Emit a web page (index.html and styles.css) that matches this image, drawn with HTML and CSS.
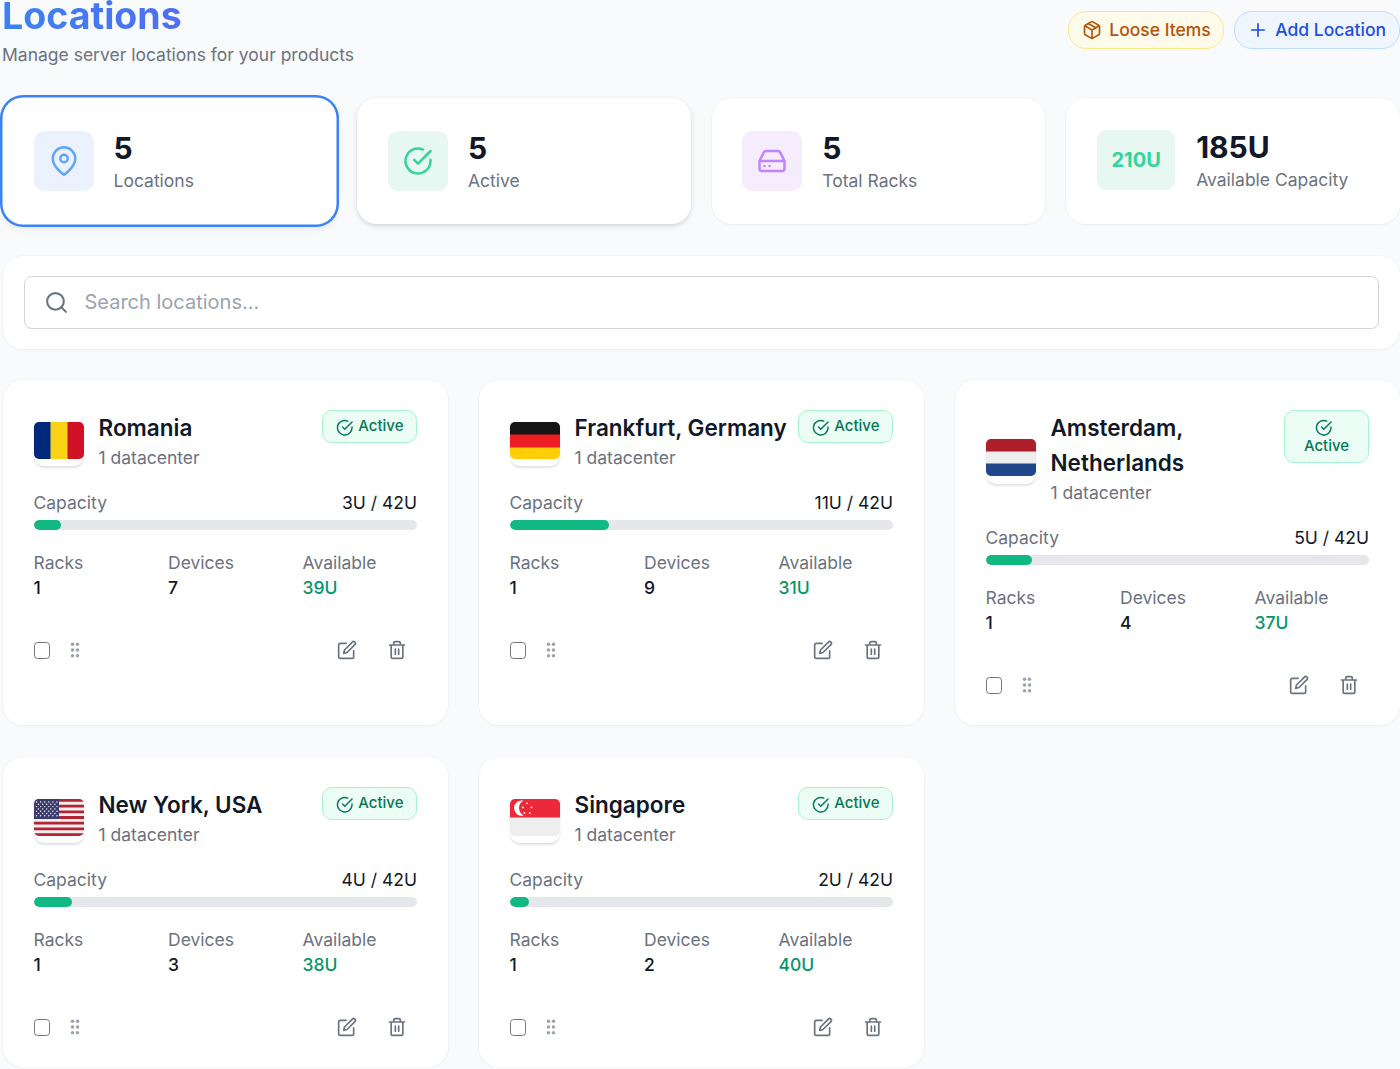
FILE: index.html
```
<!DOCTYPE html>
<html lang="en">
<head>
    <meta charset="UTF-8">
    <meta name="viewport" content="width=device-width, initial-scale=1.0">
    <title>Locations</title>
    <link rel="stylesheet" href="styles.css">
</head>
<body>
    <!-- Shared icons -->
    <svg class="sprite" aria-hidden="true">
        <symbol id="icon-check" viewBox="0 0 24 24"><path d="M22 11.08V12a10 10 0 1 1-5.93-9.14"/><path d="M22 4 12 14.01l-3-3"/></symbol>
        <symbol id="icon-edit" viewBox="0 0 24 24"><path d="M11 4H4a2 2 0 0 0-2 2v14a2 2 0 0 0 2 2h14a2 2 0 0 0 2-2v-7"/><path d="M18.5 2.5a2.121 2.121 0 0 1 3 3L12 15l-4 1 1-4 9.5-9.5z"/></symbol>
        <symbol id="icon-trash" viewBox="0 0 24 24"><path d="M3 6h18M19 6v14a2 2 0 0 1-2 2H7a2 2 0 0 1-2-2V6m3 0V4a2 2 0 0 1 2-2h4a2 2 0 0 1 2 2v2M10 11v6M14 11v6"/></symbol>
        <symbol id="icon-grip" viewBox="0 0 10 16"><circle cx="2.5" cy="2.2" r="1.75"/><circle cx="7.5" cy="2.2" r="1.75"/><circle cx="2.5" cy="8" r="1.75"/><circle cx="7.5" cy="8" r="1.75"/><circle cx="2.5" cy="13.8" r="1.75"/><circle cx="7.5" cy="13.8" r="1.75"/></symbol>
    </svg>

    <div class="page">
        <header class="page-header">
            <div>
                <h1>Locations</h1>
                <p class="subtitle">Manage server locations for your products</p>
            </div>
            <div class="header-actions">
                <button type="button" class="btn btn-amber">
                    <svg class="icon" viewBox="0 0 24 24"><path d="M16.5 9.4 7.5 4.21"/><path d="M21 16V8a2 2 0 0 0-1-1.73l-7-4a2 2 0 0 0-2 0l-7 4A2 2 0 0 0 3 8v8a2 2 0 0 0 1 1.73l7 4a2 2 0 0 0 2 0l7-4A2 2 0 0 0 21 16z"/><path d="M3.27 6.96 12 12.01l8.73-5.05M12 22.08V12"/></svg>
                    Loose Items
                </button>
                <button type="button" class="btn btn-blue">
                    <svg class="icon" viewBox="0 0 24 24"><path d="M12 4.5v15M4.5 12h15"/></svg>
                    Add Location
                </button>
            </div>
        </header>

        <section class="stats">
            <div class="stat selected">
                <div class="stat-icon blue"><svg class="icon" viewBox="0 0 24 24"><path d="M21 10c0 7-9 13-9 13s-9-6-9-13a9 9 0 0 1 18 0z"/><circle cx="12" cy="10" r="3"/></svg></div>
                <div>
                    <div class="stat-value">5</div>
                    <div class="stat-label">Locations</div>
                </div>
            </div>
            <div class="stat raised">
                <div class="stat-icon green"><svg class="icon"><use href="#icon-check"/></svg></div>
                <div>
                    <div class="stat-value">5</div>
                    <div class="stat-label">Active</div>
                </div>
            </div>
            <div class="stat">
                <div class="stat-icon purple"><svg class="icon" viewBox="0 0 24 24"><path d="M22 12H2M5.45 5.11 2 12v6a2 2 0 0 0 2 2h16a2 2 0 0 0 2-2v-6l-3.45-6.89A2 2 0 0 0 16.76 4H7.24a2 2 0 0 0-1.79 1.11zM6 16h.01M10 16h.01"/></svg></div>
                <div>
                    <div class="stat-value">5</div>
                    <div class="stat-label">Total Racks</div>
                </div>
            </div>
            <div class="stat capacity-stat">
                <div class="stat-icon green wide">210U</div>
                <div>
                    <div class="stat-value">185U</div>
                    <div class="stat-label">Available Capacity</div>
                </div>
            </div>
        </section>

        <section class="search">
            <label class="search-field">
                <svg class="icon" viewBox="0 0 24 24"><circle cx="11" cy="11" r="8"/><path d="m21 21-4.35-4.35"/></svg>
                <input type="text" placeholder="Search locations...">
            </label>
        </section>

        <section class="locations">
            <article class="card">
                <div class="card-header">
                    <div class="flag">
                        <svg viewBox="0 0 50 37"><path fill="#00297b" d="M0 0h17v37H0z"/><path fill="#fad314" d="M16.5 0H34v37H16.5z"/><path fill="#ce1124" d="M33.5 0H50v37H33.5z"/></svg>
                    </div>
                    <div class="card-title">
                        <h2>Romania</h2>
                        <p>1 datacenter</p>
                    </div>
                    <span class="badge"><svg class="icon"><use href="#icon-check"/></svg>Active</span>
                </div>
                <div class="capacity"><span>Capacity</span><span class="capacity-value">3U / 42U</span></div>
                <div class="bar"><div class="bar-fill" style="width: 7.14%"></div></div>
                <dl class="details">
                    <div><dt>Racks</dt><dd>1</dd></div>
                    <div><dt>Devices</dt><dd>7</dd></div>
                    <div><dt>Available</dt><dd class="available">39U</dd></div>
                </dl>
                <div class="card-footer">
                    <input type="checkbox" class="check">
                    <svg class="grip"><use href="#icon-grip"/></svg>
                    <button type="button" class="icon-btn first"><svg class="icon"><use href="#icon-edit"/></svg></button>
                    <button type="button" class="icon-btn"><svg class="icon"><use href="#icon-trash"/></svg></button>
                </div>
            </article>

            <article class="card">
                <div class="card-header">
                    <div class="flag">
                        <svg viewBox="0 0 50 37"><path fill="#141414" d="M0 0h50v13H0z"/><path fill="#ed1f24" d="M0 12.5h50V26H0z"/><path fill="#ffce05" d="M0 25.5h50V37H0z"/></svg>
                    </div>
                    <div class="card-title">
                        <h2>Frankfurt, Germany</h2>
                        <p>1 datacenter</p>
                    </div>
                    <span class="badge"><svg class="icon"><use href="#icon-check"/></svg>Active</span>
                </div>
                <div class="capacity"><span>Capacity</span><span class="capacity-value">11U / 42U</span></div>
                <div class="bar"><div class="bar-fill" style="width: 26%"></div></div>
                <dl class="details">
                    <div><dt>Racks</dt><dd>1</dd></div>
                    <div><dt>Devices</dt><dd>9</dd></div>
                    <div><dt>Available</dt><dd class="available">31U</dd></div>
                </dl>
                <div class="card-footer">
                    <input type="checkbox" class="check">
                    <svg class="grip"><use href="#icon-grip"/></svg>
                    <button type="button" class="icon-btn first"><svg class="icon"><use href="#icon-edit"/></svg></button>
                    <button type="button" class="icon-btn"><svg class="icon"><use href="#icon-trash"/></svg></button>
                </div>
            </article>

            <article class="card">
                <div class="card-header">
                    <div class="flag">
                        <svg viewBox="0 0 50 37"><path fill="#ae1f2a" d="M0 0h50v13H0z"/><path fill="#eee" d="M0 12.5h50V25H0z"/><path fill="#20478c" d="M0 24.5h50V37H0z"/></svg>
                    </div>
                    <div class="card-title">
                        <h2>Amsterdam, Netherlands</h2>
                        <p>1 datacenter</p>
                    </div>
                    <span class="badge stacked"><svg class="icon"><use href="#icon-check"/></svg> Active</span>
                </div>
                <div class="capacity"><span>Capacity</span><span class="capacity-value">5U / 42U</span></div>
                <div class="bar"><div class="bar-fill" style="width: 12%"></div></div>
                <dl class="details">
                    <div><dt>Racks</dt><dd>1</dd></div>
                    <div><dt>Devices</dt><dd>4</dd></div>
                    <div><dt>Available</dt><dd class="available">37U</dd></div>
                </dl>
                <div class="card-footer">
                    <input type="checkbox" class="check">
                    <svg class="grip"><use href="#icon-grip"/></svg>
                    <button type="button" class="icon-btn first"><svg class="icon"><use href="#icon-edit"/></svg></button>
                    <button type="button" class="icon-btn"><svg class="icon"><use href="#icon-trash"/></svg></button>
                </div>
            </article>

            <article class="card">
                <div class="card-header">
                    <div class="flag">
                        <svg viewBox="0 0 50 37">
                            <path fill="#eee" d="M0 0h50v37H0z"/>
                            <path stroke="#b22334" stroke-width="2.85" d="M0 1.42h50M0 7.12h50M0 12.81h50M0 18.5h50M0 24.19h50M0 29.88h50M0 35.58h50"/>
                            <path fill="#3c3b6e" d="M0 0h25v19.9H0z"/>
                            <g stroke="#fff" stroke-width="1.4" stroke-linecap="round" stroke-dasharray="0 4.1">
                                <path d="M2.5 3h21M2.5 7.6h21M2.5 12.2h21M2.5 16.8h21"/>
                                <path d="M4.5 5.3h17M4.5 9.9h17M4.5 14.5h17"/>
                            </g>
                        </svg>
                    </div>
                    <div class="card-title">
                        <h2>New York, USA</h2>
                        <p>1 datacenter</p>
                    </div>
                    <span class="badge"><svg class="icon"><use href="#icon-check"/></svg>Active</span>
                </div>
                <div class="capacity"><span>Capacity</span><span class="capacity-value">4U / 42U</span></div>
                <div class="bar"><div class="bar-fill" style="width: 10%"></div></div>
                <dl class="details">
                    <div><dt>Racks</dt><dd>1</dd></div>
                    <div><dt>Devices</dt><dd>3</dd></div>
                    <div><dt>Available</dt><dd class="available">38U</dd></div>
                </dl>
                <div class="card-footer">
                    <input type="checkbox" class="check">
                    <svg class="grip"><use href="#icon-grip"/></svg>
                    <button type="button" class="icon-btn first"><svg class="icon"><use href="#icon-edit"/></svg></button>
                    <button type="button" class="icon-btn"><svg class="icon"><use href="#icon-trash"/></svg></button>
                </div>
            </article>

            <article class="card">
                <div class="card-header">
                    <div class="flag">
                        <svg viewBox="0 0 50 37">
                            <path fill="#eee" d="M0 18h50v19H0z"/>
                            <path fill="#ed2939" d="M0 0h50v18.5H0z"/>
                            <path fill="#fff" d="M13.5 1.6A7.7 7.7 0 1 0 13.5 16.6 8.6 8.6 0 0 1 13.5 1.6z"/>
                            <g fill="#fff"><circle cx="17" cy="4.3" r=".9"/><circle cx="12.8" cy="8.4" r=".9"/><circle cx="21.5" cy="8.4" r=".9"/><circle cx="14.4" cy="14" r=".9"/><circle cx="19.8" cy="14" r=".9"/></g>
                        </svg>
                    </div>
                    <div class="card-title">
                        <h2>Singapore</h2>
                        <p>1 datacenter</p>
                    </div>
                    <span class="badge"><svg class="icon"><use href="#icon-check"/></svg>Active</span>
                </div>
                <div class="capacity"><span>Capacity</span><span class="capacity-value">2U / 42U</span></div>
                <div class="bar"><div class="bar-fill" style="width: 5.2%"></div></div>
                <dl class="details">
                    <div><dt>Racks</dt><dd>1</dd></div>
                    <div><dt>Devices</dt><dd>2</dd></div>
                    <div><dt>Available</dt><dd class="available">40U</dd></div>
                </dl>
                <div class="card-footer">
                    <input type="checkbox" class="check">
                    <svg class="grip"><use href="#icon-grip"/></svg>
                    <button type="button" class="icon-btn first"><svg class="icon"><use href="#icon-edit"/></svg></button>
                    <button type="button" class="icon-btn"><svg class="icon"><use href="#icon-trash"/></svg></button>
                </div>
            </article>
        </section>
    </div>
</body>
</html>
```
FILE: styles.css
```
* {
    box-sizing: border-box;
}
body {
    font-family: Inter, "Liberation Sans", sans-serif;
    font-size: 17.5px;
    line-height: 25px;
    color: #111827;
    background-color: #f9fafc;
    margin: 0;
    overflow: hidden;
}
h1, h2, p, dl, dd {
    margin: 0;
}
button, input {
    font-family: inherit;
}
.sprite {
    display: none;
}
.icon {
    fill: none;
    stroke: currentColor;
    stroke-width: 2;
    stroke-linecap: round;
    stroke-linejoin: round;
    flex: none;
}
.page {
    padding: 0 0.5px 0 3px;
}

/* Header */
.page-header {
    display: flex;
    justify-content: space-between;
    height: 98px;
}
.page-header h1 {
    width: max-content;
    margin-left: -1px;
    font-size: 37.5px;
    line-height: 31px;
    font-weight: 700;
    background: linear-gradient(90deg, #3b82f6, #4f6ff0);
    background-clip: text;
    -webkit-background-clip: text;
    color: transparent;
}
.subtitle {
    margin: 11px 0 0 -1px;
    color: #6b7280;
}
.header-actions {
    display: flex;
    align-items: flex-start;
    gap: 10px;
    margin-top: 11px;
}
.btn {
    display: flex;
    align-items: center;
    gap: 7.5px;
    height: 38px;
    padding: 0 12.5px 1px;
    border: 1.25px solid;
    border-radius: 18px;
    font-size: 17.5px;
    font-weight: 500;
    white-space: nowrap;
}
.btn .icon {
    width: 20px;
    height: 20px;
}
.btn-amber {
    color: #b45309;
    background-color: #fffbeb;
    border-color: #fde68a;
}
.btn-blue {
    color: #1d4ed8;
    background-color: #eff6ff;
    border-color: #bfdbfe;
}

/* Stats */
.stats {
    display: grid;
    grid-template-columns: repeat(4, 1fr);
    gap: 21px;
}
.stat, .search, .card {
    background-color: #fff;
    border-radius: 20px;
    box-shadow: 0 0 0 1px rgba(17, 24, 39, 0.02), 0 1px 3px rgba(17, 24, 39, 0.04);
}
.stat {
    display: flex;
    align-items: center;
    gap: 20px;
    height: 126px;
    padding: 0 30.5px;
}
.stat.selected {
    box-shadow: 0 0 0 0.5px #fff, 0 0 0 3px #3b82f6, 0 4px 8px rgba(17, 24, 39, 0.1);
}
.stat.raised {
    box-shadow: 0 2px 5px rgba(17, 24, 39, 0.16);
}
.stat.capacity-stat {
    gap: 21px;
    padding: 0 0 2px 31px;
}
.stat-icon {
    display: flex;
    align-items: center;
    justify-content: center;
    width: 60px;
    height: 60px;
    border-radius: 10px;
}
.stat-icon .icon {
    width: 30px;
    height: 30px;
}
.stat-icon.blue {
    color: #60a5fa;
    background-color: #ebf2fe;
}
.stat-icon.green {
    color: #34d399;
    background-color: #e7f8f2;
}
.stat-icon.purple {
    color: #c084fc;
    background-color: #f5edfe;
}
.stat-icon.wide {
    width: 78px;
    font-size: 20px;
    font-weight: 700;
}
.stat-value {
    font-size: 30px;
    line-height: 39px;
    font-weight: 700;
}
.stat-label {
    color: #6b7280;
}

/* Search */
.search {
    margin-top: 32px;
    padding: 20px 20.5px;
}
.search-field {
    display: flex;
    align-items: center;
    height: 52.5px;
    padding: 0 19px;
    border: 1.25px solid #d1d5db;
    border-radius: 7.5px;
    color: #6b7280;
}
.search-field .icon {
    width: 25px;
    height: 25px;
}
.search-field input {
    flex: 1;
    margin-left: 16px;
    padding: 0;
    border: none;
    outline: none;
    background: none;
    font-size: 20px;
    color: #111827;
}
.search-field input::placeholder {
    color: #9ca3af;
}

/* Location cards */
.locations {
    display: grid;
    grid-template-columns: repeat(3, 1fr);
    gap: 32px 31.5px;
    margin-top: 31.9px;
}
.card {
    padding: 30px 30.5px 20px;
}
.card-header {
    display: flex;
    align-items: center;
    margin-bottom: 20px;
}
.flag {
    flex: none;
    width: 50px;
    height: 52px;
    padding-top: 7.5px;
    margin-right: 15px;
    border-radius: 10px;
    box-shadow: 0 1.5px 2px rgba(17, 24, 39, 0.12);
}
.flag svg {
    display: block;
    width: 50px;
    height: 37px;
    border-radius: 5px;
}
.card-title {
    flex: 1;
    min-width: 0;
}
.card-title h2 {
    font-size: 22.5px;
    line-height: 35px;
    font-weight: 600;
}
.card-title p {
    color: #6b7280;
}
.badge {
    flex: none;
    align-self: flex-start;
    padding: 5px 12.5px 5.5px;
    border: 1.25px solid #a7f3d0;
    border-radius: 10px;
    background-color: #ecfdf5;
    color: #047857;
    font-size: 15px;
    line-height: 20px;
    font-weight: 500;
    text-align: center;
    white-space: nowrap;
}
.badge .icon {
    width: 17.5px;
    height: 17.5px;
    margin-right: 5px;
    vertical-align: -5px;
}
.badge.stacked {
    width: 85px;
    white-space: normal;
}
.capacity {
    display: flex;
    justify-content: space-between;
    color: #6b7280;
}
.capacity-value {
    color: #111827;
}
.bar {
    height: 10px;
    margin: 5px 0 20px;
    border-radius: 5px;
    background-color: #e5e7eb;
    overflow: hidden;
}
.bar-fill {
    height: 100%;
    border-radius: 5px;
    background-color: #10b981;
}
.details {
    display: grid;
    grid-template-columns: repeat(3, 1fr);
    gap: 20px;
}
.details dt {
    color: #6b7280;
}
.details dd {
    font-weight: 500;
}
.details .available {
    color: #059669;
}
.card-footer {
    display: flex;
    align-items: center;
    height: 40px;
    margin-top: 30px;
}
.check {
    appearance: none;
    width: 16.5px;
    height: 16.5px;
    margin: 0;
    border: 1.25px solid #767676;
    border-radius: 3.5px;
    background-color: #fff;
}
.grip {
    width: 10px;
    height: 16px;
    margin-left: 19.5px;
    fill: #9ca3af;
}
.icon-btn {
    display: flex;
    align-items: center;
    justify-content: center;
    width: 40px;
    height: 40px;
    margin-left: 10px;
    padding: 0;
    border: none;
    background: none;
    color: #6b7280;
}
.icon-btn.first {
    margin-left: auto;
}
.icon-btn .icon {
    width: 20px;
    height: 20px;
}
```
